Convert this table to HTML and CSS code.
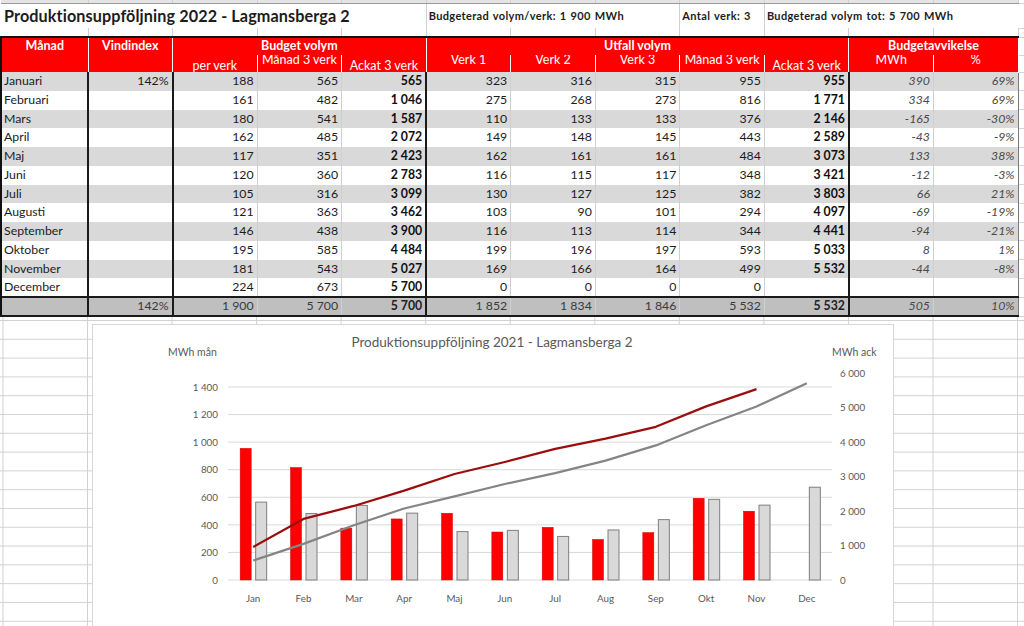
FILE: index.html
```html
<!DOCTYPE html>
<html lang="sv">
<head>
<meta charset="utf-8">
<title>Produktionsuppföljning 2022 - Lagmansberga 2</title>
<link rel="stylesheet" href="styles.css">
</head>
<body>
<div class="page">
<table class="sheet">
<colgroup>
<col class="c0"><col class="c"><col class="c"><col class="c"><col class="c"><col class="c"><col class="c"><col class="c"><col class="c"><col class="c"><col class="c"><col class="c"><col class="cx">
</colgroup>
<tbody>
<tr class="r0"><td></td><td></td><td></td><td></td><td></td><td></td><td></td><td></td><td></td><td></td><td></td><td></td><td class="x"></td></tr>
<tr class="title">
<td colspan="5" class="ttl">Produktionsuppföljning 2022 - Lagmansberga 2</td>
<td colspan="3" class="info">Budgeterad volym/verk: 1&nbsp;900 MWh</td>
<td class="info">Antal verk: 3</td>
<td colspan="3" class="info">Budgeterad volym tot: 5&nbsp;700 MWh</td>
<td class="x"></td>
</tr>
<tr class="gap"><td></td><td></td><td></td><td></td><td></td><td></td><td></td><td></td><td></td><td></td><td></td><td></td><td class="x"></td></tr>
<tr class="h1">
<td class="first">Månad</td>
<td>Vindindex</td>
<td colspan="3">Budget volym</td>
<td colspan="5">Utfall volym</td>
<td colspan="2">Budgetavvikelse</td>
<td class="x"></td>
</tr>
<tr class="h2">
<td class="first"></td>
<td></td>
<td><div class="hc lo"><span>per verk</span></div></td>
<td><div class="hc up"><span>Månad 3 verk</span></div></td>
<td><div class="hc lo"><span>Ackat 3 verk</span></div></td>
<td><div class="hc up"><span>Verk 1</span></div></td>
<td><div class="hc up"><span>Verk 2</span></div></td>
<td><div class="hc up"><span>Verk 3</span></div></td>
<td><div class="hc up"><span>Månad 3 verk</span></div></td>
<td><div class="hc lo"><span>Ackat 3 verk</span></div></td>
<td><div class="hc up"><span>MWh</span></div></td>
<td><div class="hc up"><span>%</span></div></td>
<td class="x"></td>
</tr>
<tr class="d g"><td class="m">Januari</td><td class="bk">142%</td><td>188</td><td>565</td><td class="b bk">565</td><td>323</td><td>316</td><td>315</td><td>955</td><td class="b bk">955</td><td class="i">390</td><td class="i e">69%</td><td class="x"></td></tr>
<tr class="d"><td class="m">Februari</td><td class="bk"></td><td>161</td><td>482</td><td class="b bk">1&nbsp;046</td><td>275</td><td>268</td><td>273</td><td>816</td><td class="b bk">1&nbsp;771</td><td class="i">334</td><td class="i e">69%</td><td class="x"></td></tr>
<tr class="d g"><td class="m">Mars</td><td class="bk"></td><td>180</td><td>541</td><td class="b bk">1&nbsp;587</td><td>110</td><td>133</td><td>133</td><td>376</td><td class="b bk">2&nbsp;146</td><td class="i">-165</td><td class="i e">-30%</td><td class="x"></td></tr>
<tr class="d"><td class="m">April</td><td class="bk"></td><td>162</td><td>485</td><td class="b bk">2&nbsp;072</td><td>149</td><td>148</td><td>145</td><td>443</td><td class="b bk">2&nbsp;589</td><td class="i">-43</td><td class="i e">-9%</td><td class="x"></td></tr>
<tr class="d g"><td class="m">Maj</td><td class="bk"></td><td>117</td><td>351</td><td class="b bk">2&nbsp;423</td><td>162</td><td>161</td><td>161</td><td>484</td><td class="b bk">3&nbsp;073</td><td class="i">133</td><td class="i e">38%</td><td class="x"></td></tr>
<tr class="d"><td class="m">Juni</td><td class="bk"></td><td>120</td><td>360</td><td class="b bk">2&nbsp;783</td><td>116</td><td>115</td><td>117</td><td>348</td><td class="b bk">3&nbsp;421</td><td class="i">-12</td><td class="i e">-3%</td><td class="x"></td></tr>
<tr class="d g"><td class="m">Juli</td><td class="bk"></td><td>105</td><td>316</td><td class="b bk">3&nbsp;099</td><td>130</td><td>127</td><td>125</td><td>382</td><td class="b bk">3&nbsp;803</td><td class="i">66</td><td class="i e">21%</td><td class="x"></td></tr>
<tr class="d"><td class="m">Augusti</td><td class="bk"></td><td>121</td><td>363</td><td class="b bk">3&nbsp;462</td><td>103</td><td>90</td><td>101</td><td>294</td><td class="b bk">4&nbsp;097</td><td class="i">-69</td><td class="i e">-19%</td><td class="x"></td></tr>
<tr class="d g"><td class="m">September</td><td class="bk"></td><td>146</td><td>438</td><td class="b bk">3&nbsp;900</td><td>116</td><td>113</td><td>114</td><td>344</td><td class="b bk">4&nbsp;441</td><td class="i">-94</td><td class="i e">-21%</td><td class="x"></td></tr>
<tr class="d"><td class="m">Oktober</td><td class="bk"></td><td>195</td><td>585</td><td class="b bk">4&nbsp;484</td><td>199</td><td>196</td><td>197</td><td>593</td><td class="b bk">5&nbsp;033</td><td class="i">8</td><td class="i e">1%</td><td class="x"></td></tr>
<tr class="d g"><td class="m">November</td><td class="bk"></td><td>181</td><td>543</td><td class="b bk">5&nbsp;027</td><td>169</td><td>166</td><td>164</td><td>499</td><td class="b bk">5&nbsp;532</td><td class="i">-44</td><td class="i e">-8%</td><td class="x"></td></tr>
<tr class="d"><td class="m">December</td><td class="bk"></td><td>224</td><td>673</td><td class="b bk">5&nbsp;700</td><td>0</td><td>0</td><td>0</td><td>0</td><td class="b bk"></td><td class="i"></td><td class="i e"></td><td class="x"></td></tr>
<tr class="tot"><td class="m"></td><td class="bk">142%</td><td>1&nbsp;900</td><td>5&nbsp;700</td><td class="b bk">5&nbsp;700</td><td>1&nbsp;852</td><td>1&nbsp;834</td><td>1&nbsp;846</td><td>5&nbsp;532</td><td class="b bk">5&nbsp;532</td><td class="i">505</td><td class="i e">10%</td><td class="x"></td></tr>
</tbody>
</table>
<div class="below"></div>

<div class="chart">
<svg width="800" height="310" viewBox="0 0 800 310" xmlns="http://www.w3.org/2000/svg">
<g class="grid">
<line x1="135" y1="62" x2="739" y2="62"/>
<line x1="135" y1="89.57" x2="739" y2="89.57"/>
<line x1="135" y1="117.14" x2="739" y2="117.14"/>
<line x1="135" y1="144.71" x2="739" y2="144.71"/>
<line x1="135" y1="172.28" x2="739" y2="172.28"/>
<line x1="135" y1="199.86" x2="739" y2="199.86"/>
<line x1="135" y1="227.43" x2="739" y2="227.43"/>
<line x1="135" y1="255" x2="739" y2="255"/>
</g>
<text class="ttl" x="399" y="22" text-anchor="middle">Produktionsuppföljning 2021 - Lagmansberga 2</text>
<text class="ax" x="75" y="31">MWh mån</text>
<text class="ax" x="739" y="31">MWh ack</text>
<g class="lab" text-anchor="end">
<text x="125" y="65.5">1 400</text>
<text x="125" y="93">1 200</text>
<text x="125" y="120.5">1 000</text>
<text x="125" y="148">800</text>
<text x="125" y="175.5">600</text>
<text x="125" y="203.5">400</text>
<text x="125" y="231">200</text>
<text x="125" y="258.5">0</text>
</g>
<g class="lab">
<text x="747" y="51.5">6 000</text>
<text x="747" y="86">5 000</text>
<text x="747" y="120.5">4 000</text>
<text x="747" y="155">3 000</text>
<text x="747" y="189.5">2 000</text>
<text x="747" y="224">1 000</text>
<text x="747" y="258.5">0</text>
</g>
<g class="red">
<rect x="147.17" y="123.34" width="11" height="131.66"/>
<rect x="197.5" y="142.51" width="11" height="112.49"/>
<rect x="247.83" y="203.16" width="11" height="51.84"/>
<rect x="298.17" y="193.93" width="11" height="61.07"/>
<rect x="348.5" y="188.28" width="11" height="66.72"/>
<rect x="398.83" y="207.02" width="11" height="47.98"/>
<rect x="449.17" y="202.34" width="11" height="52.66"/>
<rect x="499.5" y="214.47" width="11" height="40.53"/>
<rect x="549.83" y="207.58" width="11" height="47.42"/>
<rect x="600.17" y="173.25" width="11" height="81.75"/>
<rect x="650.5" y="186.21" width="11" height="68.79"/>
</g>
<g class="gray">
<rect x="162.67" y="177.11" width="11" height="77.89"/>
<rect x="213" y="188.55" width="11" height="66.45"/>
<rect x="263.33" y="180.42" width="11" height="74.58"/>
<rect x="313.67" y="188.14" width="11" height="66.86"/>
<rect x="364" y="206.61" width="11" height="48.39"/>
<rect x="414.33" y="205.37" width="11" height="49.63"/>
<rect x="464.67" y="211.44" width="11" height="43.56"/>
<rect x="515" y="204.96" width="11" height="50.04"/>
<rect x="565.33" y="194.62" width="11" height="60.38"/>
<rect x="615.67" y="174.35" width="11" height="80.65"/>
<rect x="666" y="180.14" width="11" height="74.86"/>
<rect x="716.33" y="162.22" width="11" height="92.78"/>
</g>
<polyline class="lg" points="160.17,235.51 210.5,218.91 260.83,200.25 311.17,183.52 361.5,171.41 411.83,158.99 462.17,148.08 512.5,135.56 562.83,120.45 613.17,100.3 663.5,81.57 713.83,58.35"/>
<polyline class="lr" points="160.17,222.05 210.5,193.9 260.83,180.96 311.17,165.68 361.5,148.98 411.83,136.98 462.17,123.8 512.5,113.65 562.83,101.79 613.17,81.36 663.5,64.15"/>
<g class="lab" text-anchor="middle">
<text x="160.17" y="277">Jan</text>
<text x="210.5" y="277">Feb</text>
<text x="260.83" y="277">Mar</text>
<text x="311.17" y="277">Apr</text>
<text x="361.5" y="277">Maj</text>
<text x="411.83" y="277">Jun</text>
<text x="462.17" y="277">Jul</text>
<text x="512.5" y="277">Aug</text>
<text x="562.83" y="277">Sep</text>
<text x="613.17" y="277">Okt</text>
<text x="663.5" y="277">Nov</text>
<text x="713.83" y="277">Dec</text>
</g>
</svg>
</div>
</div>
</body>
</html>
```
FILE: styles.css
```css
* { box-sizing: border-box; }
html, body { margin: 0; padding: 0; background: #fff; }
body {
  font-family: Lato, "Liberation Sans", sans-serif;
  font-size: 12px;
  color: #1c1c1c;
}
.page {
  position: relative;
  width: 1024px;
  height: 626px;
  overflow: hidden;
}

/* ---------- spreadsheet table ---------- */
.sheet {
  border-collapse: collapse;
  table-layout: fixed;
  width: 1024px;
}
.c0 { width: 87px; }
.c { width: 84.55px; }
.cx { width: 7px; }

.sheet td {
  padding: 0 3px;
  white-space: nowrap;
  overflow: hidden;
  text-align: right;
  border: 0;
  border-right: 1px solid #cfcfcf;
  line-height: 1;
}
.sheet td.x { border-right: 0; border-bottom: 1px solid #d4d4d4; background: #fff; padding: 0; }

.r0 td { height: 3px; background: #e4e4e4; border-bottom: 1px solid #9a9a9a; padding: 0; }

.title td { height: 25px; background: #fff; border-right: 0; text-align: left; }
.title td.info { border-left: 1px solid #d0d0d0; font-weight: 700; font-size: 11px; letter-spacing: 0.35px; word-spacing: 1px; padding-left: 2px; }
.title td.ttl { font-weight: 700; font-size: 16.2px; padding-left: 3px; letter-spacing: 0.1px; }

.gap td { height: 9px; background: #fff; padding: 0; }

.h1 td {
  height: 18px;
  background: #ff0000;
  color: #fff;
  font-weight: 700;
  font-size: 12.5px;
  text-align: center;
  border-top: 2px solid #111;
  border-right: 1px solid #fff;
}
.h1 td.x, .h2 td.x { border-top: 0; background: #fff; border-right: 0; }
.h2 td {
  height: 17px;
  padding: 0;
  background: #ff0000;
  color: #fff;
  text-align: center;
  border-right: 1px solid #fff;
  font-size: 12.5px;
}
.sheet td.first { border-left: 2px solid #111; }
.hc { height: 17px; overflow: hidden; }
.hc span { display: block; line-height: 14px; }
.hc.lo span { margin-top: 4px; }
.hc.up span { margin-top: -2px; }

.d td { height: 18.75px; background: #fff; font-size: 12.3px; }
.d.g td { background: #d9d9d9; }
.d.g td.x { background: #fff; }
.sheet td.m { text-align: left; border-left: 2px solid #111; border-right: 2px solid #1a1a1a; padding-left: 2px; }
.sheet td.bk { border-right: 2px solid #1a1a1a; }
.sheet td.b { font-weight: 700; color: #111; }
.sheet td.i { font-style: italic; color: #4a4a4a; }
.sheet td.e { border-right: 1px solid #7a7a7a; }

.tot td {
  height: 19px;
  background: #bfbfbf;
  color: #3a3a3a;
  font-size: 12.3px;
  border-top: 2px solid #1a1a1a;
  border-bottom: 2px solid #1a1a1a;
}
.tot td.x { border-top: 0; border-bottom: 1px solid #d4d4d4; }
.sheet .tot td.b { color: #222; }

/* empty spreadsheet area under the table */
.below {
  height: 320px;
  background-color: #fff;
  background-image:
    linear-gradient(to right, #d2d2d2 0, #d2d2d2 1px, transparent 1px),
    linear-gradient(to bottom, #d2d2d2 0, #d2d2d2 1px, transparent 1px);
  background-size: 84.55px 100%, 100% 18.8px;
  background-position: 87px 0, 0 3px;
}

/* ---------- chart ---------- */
.chart {
  position: absolute;
  left: 92px;
  top: 324px;
  width: 802px;
  height: 312px;
  background: #fff;
  border: 1px solid #d6d6d6;
}
.chart svg { display: block; font-family: Lato, "Liberation Sans", sans-serif; }
.chart .grid line { stroke: #d9d9d9; stroke-width: 1; }
.chart .ttl { fill: #595959; font-size: 13.5px; }
.chart .ax { fill: #595959; font-size: 10.5px; }
.chart .lab { fill: #595959; font-size: 9.8px; }
.chart .red rect { fill: #ff0000; stroke: #d00000; stroke-width: 0.5; }
.chart .gray rect { fill: #d9d9d9; stroke: #7f7f7f; stroke-width: 1; }
.chart .lr { fill: none; stroke: #9b0e0e; stroke-width: 2.25; stroke-linejoin: round; }
.chart .lg { fill: none; stroke: #858585; stroke-width: 2.25; stroke-linejoin: round; }
```
